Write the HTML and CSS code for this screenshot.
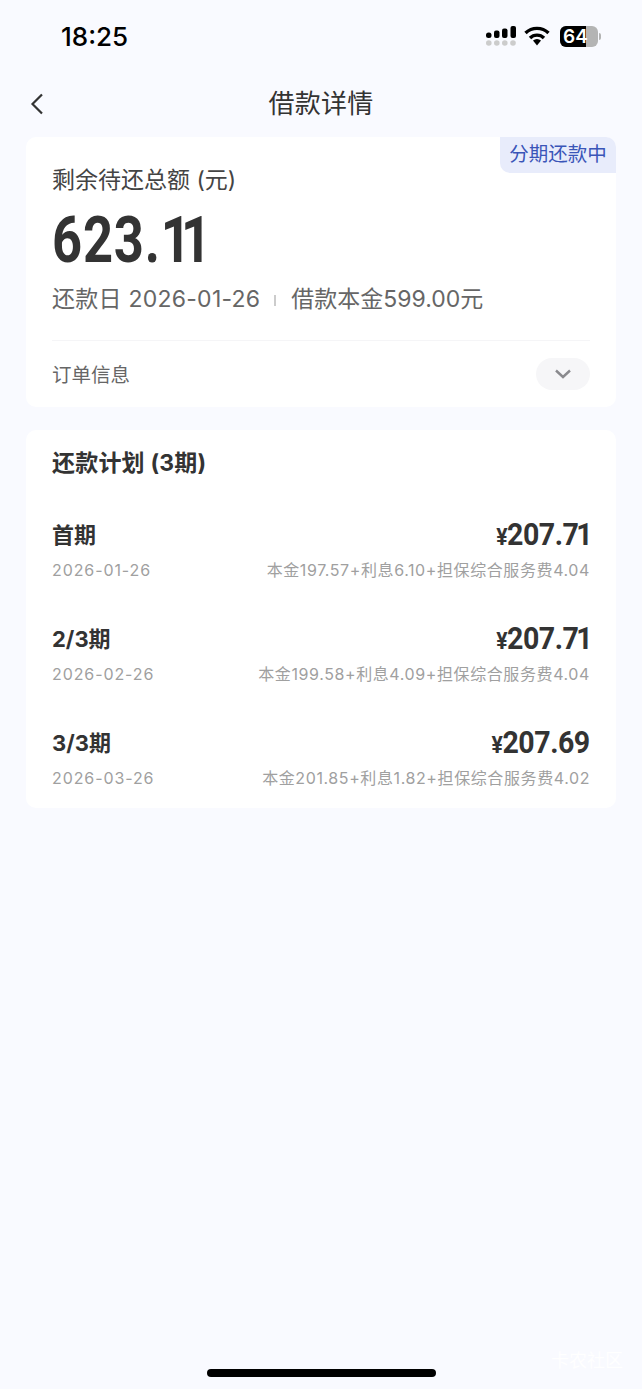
FILE: index.html
```html
<!DOCTYPE html>
<html lang="zh-CN">
<head>
  <meta charset="UTF-8">
  <meta name="viewport" content="width=device-width, initial-scale=1.0">
  <title>借款详情</title>
  <link rel="stylesheet" href="styles.css">
</head>
<body>

  <div class="status-bar">
    <div class="time">18:25</div>
    <div class="status-icons">
      <svg class="signal" width="30" height="20" viewBox="0 0 30 20">
        <rect x="0" y="6.500" width="5.500" height="5.500" rx="2.500" fill="#000"/>
        <rect x="8" y="4.500" width="5.500" height="7.500" rx="2" fill="#000"/>
        <rect x="16" y="2.500" width="5.500" height="9.500" rx="2" fill="#000"/>
        <rect x="24.500" y="0" width="5.500" height="12" rx="2" fill="#000"/>
        <circle cx="2.800" cy="17" r="2.800" fill="#ccc"/>
        <circle cx="10.800" cy="17" r="2.800" fill="#ccc"/>
        <circle cx="18.800" cy="17" r="2.800" fill="#ccc"/>
        <circle cx="27" cy="17" r="2.800" fill="#ccc"/>
      </svg>
      <svg class="wifi" width="26" height="20" viewBox="0 0 26 20">
        <path d="M1.500 7 A16.500 16.500 0 0 1 24.500 7" fill="none" stroke="#000" stroke-width="3.400"/>
        <path d="M6 12 A10 10 0 0 1 20 12" fill="none" stroke="#000" stroke-width="3.400"/>
        <path d="M9 14.500 A6 6 0 0 1 17 14.500 L13 19.500 Z" fill="#000"/>
      </svg>
      <div class="battery">
        <div class="battery-level"></div>
        <span class="battery-text">64</span>
      </div>
      <div class="battery-cap"></div>
    </div>
  </div>

  <header class="nav">
    <svg class="back" width="14" height="22" viewBox="0 0 14 22">
      <path d="M12 1.500 L2.500 11 L12 20.500" fill="none" stroke="#333" stroke-width="2.200"/>
    </svg>
    <h1>借款详情</h1>
  </header>

  <section class="card summary">
    <div class="tag">分期还款中</div>
    <div class="summary-label">剩余待还总额 (元)</div>
    <div class="summary-amount">623.<span class="ones">11</span></div>
    <div class="summary-meta">
      <span class="meta-date">还款日 2026-01-26</span>
      <i class="meta-line"></i>
      <span>借款本金599.00元</span>
    </div>
    <div class="order-row">
      <span class="order-label">订单信息</span>
      <div class="expand">
        <svg width="18" height="12" viewBox="0 0 18 12">
          <path d="M2 2.500 L9 9 L16 2.500" fill="none" stroke="#8a8a8e" stroke-width="2.400"/>
        </svg>
      </div>
    </div>
  </section>

  <section class="card plan">
    <h2>还款计划 (3期)</h2>

    <div class="plan-row">
      <div class="plan-top">
        <span class="plan-name">首期</span>
        <span class="plan-money"><small>¥</small>207.<span class="tight">71</span></span>
      </div>
      <div class="plan-bottom">
        <span class="plan-date">2026-01-26</span>
        <span>本金197.57+利息6.10+担保综合服务费4.04</span>
      </div>
    </div>

    <div class="plan-row">
      <div class="plan-top">
        <span class="plan-name">2/3期</span>
        <span class="plan-money"><small>¥</small>207.<span class="tight">71</span></span>
      </div>
      <div class="plan-bottom">
        <span class="plan-date">2026-02-26</span>
        <span>本金199.58+利息4.09+担保综合服务费4.04</span>
      </div>
    </div>

    <div class="plan-row">
      <div class="plan-top">
        <span class="plan-name">3/3期</span>
        <span class="plan-money"><small>¥</small>207.69</span>
      </div>
      <div class="plan-bottom">
        <span class="plan-date">2026-03-26</span>
        <span>本金201.85+利息1.82+担保综合服务费4.02</span>
      </div>
    </div>
  </section>

  <div class="watermark">卡农社区</div>
  <div class="home-bar"></div>

</body>
</html>
```

FILE: styles.css
```css
* {
  box-sizing: border-box;
}

html, body {
  height: 100%;
}

body {
  position: relative;
  margin: 0;
  padding: 0;
  background-color: #f9faff;
  color: #333;
  font-family: Inter, "Noto Sans CJK SC", sans-serif;
  overflow: hidden;
}

/* Status bar */
.status-bar {
  height: 72px;
  display: flex;
  justify-content: space-between;
  align-items: center;
  padding: 0 41px 0 61px;
}

.time {
  font-size: 26px;
  font-weight: 500;
  color: #000;
}

.status-icons {
  display: flex;
  align-items: center;
}

.signal {
  margin-right: 8px;
}

.wifi {
  margin-right: 10px;
}

.battery {
  position: relative;
  width: 38px;
  height: 21px;
  border-radius: 6px;
  background-color: #b4b4b4;
  overflow: hidden;
}

.battery-level {
  width: 26px;
  height: 100%;
  background-color: #000;
}

.battery-text {
  position: absolute;
  top: 0;
  left: 0;
  width: 31px;
  text-align: center;
  font-size: 19px;
  line-height: 21px;
  font-weight: 600;
  color: #fff;
}

.battery-cap {
  width: 2px;
  height: 7px;
  margin-left: 1px;
  border-radius: 0 2px 2px 0;
  background-color: #b4b4b4;
}

/* Nav */
.nav {
  position: relative;
  height: 64px;
  display: flex;
  justify-content: center;
  align-items: center;
}

.nav h1 {
  margin: 0;
  font-size: 26px;
  line-height: 64px;
  font-weight: 400;
  letter-spacing: 0.3px;
  color: #333;
}

.back {
  position: absolute;
  left: 30px;
  top: 21px;
}

/* Cards */
.card {
  position: relative;
  margin: 0 26px 0 26px;
  background-color: #fff;
  border-radius: 10px;
}

.summary {
  margin-top: 1px;
  height: 270px;
  padding: 26px 26px 0;
}

.tag {
  position: absolute;
  top: 0;
  right: 0;
  width: 116px;
  height: 36px;
  background-color: #e8ecfb;
  border-radius: 0 10px 0 10px;
  color: #3a55b8;
  font-size: 19.500px;
  line-height: 35px;
  text-align: center;
}

.summary-label {
  font-size: 23px;
  line-height: 34px;
  color: #444;
}

.summary-amount {
  margin-top: 6px;
  font-family: Roboto, sans-serif;
  font-size: 64px;
  line-height: 76px;
  font-weight: 700;
  letter-spacing: 1px;
  color: #333;
  transform: scaleX(0.82);
  transform-origin: left;
}

.summary-amount .ones {
  letter-spacing: -12px;
}

.summary-meta {
  margin-top: 3px;
  display: flex;
  align-items: center;
  font-size: 23px;
  line-height: 34px;
  color: #666;
}

.meta-date {
  letter-spacing: 0.25px;
}

.meta-line {
  width: 2px;
  height: 11px;
  margin: 2px 15px 0 14px;
  background-color: #ccc;
}

.order-row {
  margin-top: 24px;
  padding-top: 17px;
  border-top: 1px solid #f5f5f7;
  display: flex;
  justify-content: space-between;
  align-items: center;
  font-size: 19.500px;
  color: #666;
}

.order-label {
  padding-bottom: 2px;
}

.expand {
  width: 54px;
  height: 32px;
  border-radius: 16px;
  background-color: #f6f6f8;
  display: flex;
  justify-content: center;
  align-items: center;
}

.plan {
  margin-top: 23px;
  height: 378px;
  padding: 17px 26px 0;
}

.plan h2 {
  margin: 0 0 36px;
  font-size: 23px;
  line-height: 32px;
  font-weight: 700;
  letter-spacing: 0.2px;
  color: #333;
}

.plan-row {
  height: 104px;
}

.plan-top {
  display: flex;
  justify-content: space-between;
  align-items: center;
  height: 36px;
}

.plan-name {
  font-size: 22px;
  font-weight: 700;
  color: #333;
}

.plan-money {
  padding-top: 2px;
  font-family: Roboto, sans-serif;
  font-size: 31px;
  font-weight: 700;
  letter-spacing: -0.5px;
  color: #333;
  transform: scaleX(0.92);
  transform-origin: right;
}

.plan-money small {
  font-size: 23px;
}

.plan-money .tight {
  letter-spacing: -3px;
}

.plan-bottom {
  margin-top: 7px;
  display: flex;
  justify-content: space-between;
  font-size: 16px;
  line-height: 24px;
  letter-spacing: 0.6px;
  color: #a0a0a0;
}

.plan-date {
  letter-spacing: 0.9px;
}

/* Overlays at the bottom */
.watermark {
  position: absolute;
  left: 551px;
  top: 1346px;
  font-size: 18px;
  color: #fff;
}

.home-bar {
  position: absolute;
  left: 207px;
  top: 1369px;
  width: 229px;
  height: 8px;
  border-radius: 4px;
  background-color: #000;
}
```
